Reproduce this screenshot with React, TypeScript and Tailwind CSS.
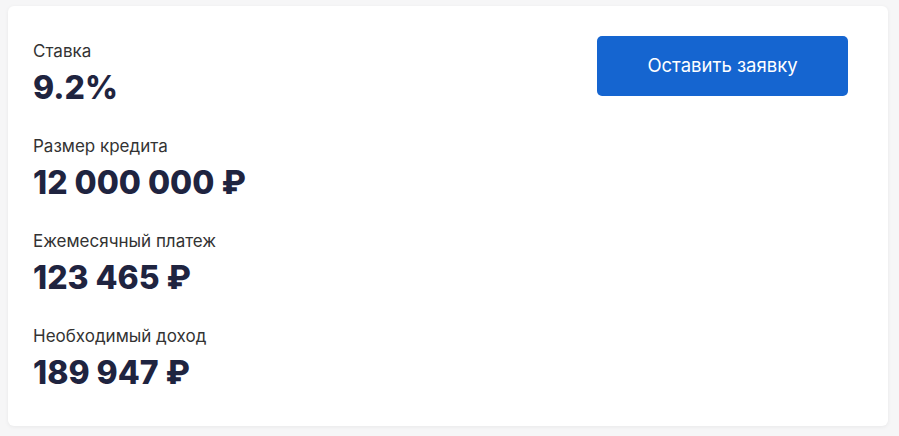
import React from "react";

const rows = [
  { label: "Ставка", value: "9.2%" },
  { label: "Размер кредита", value: "12 000 000 ₽" },
  { label: "Ежемесячный платеж", value: "123 465 ₽" },
  { label: "Необходимый доход", value: "189 947 ₽" },
];

export default function App() {
  return (
    <div
      className="w-[899px] h-[436px] bg-[#f6f6f7] pt-[6px] pl-[8px]"
      style={{ fontFamily: "Inter, 'Noto Sans', sans-serif" }}
    >
      <div className="w-[880px] h-[420px] bg-white rounded-[6px] shadow-[0_1px_4px_rgba(0,0,0,0.06)] flex justify-between pl-[25px] pr-[40px] pt-[30px]">
        <div className="flex flex-col gap-[25px] pt-[3px]">
          {rows.map((r) => (
            <div key={r.label} className="flex flex-col">
              <span className="text-[17px] leading-[24px] text-[#333]">{r.label}</span>
              <span className="text-[32px] leading-[42px] font-extrabold text-[#1f2440] mt-[4px]">
                {r.value}
              </span>
            </div>
          ))}
        </div>
        <button className="w-[251px] h-[60px] bg-[#1565d0] rounded-[5px] text-white text-[18.5px]">
          Оставить заявку
        </button>
      </div>
    </div>
  );
}
